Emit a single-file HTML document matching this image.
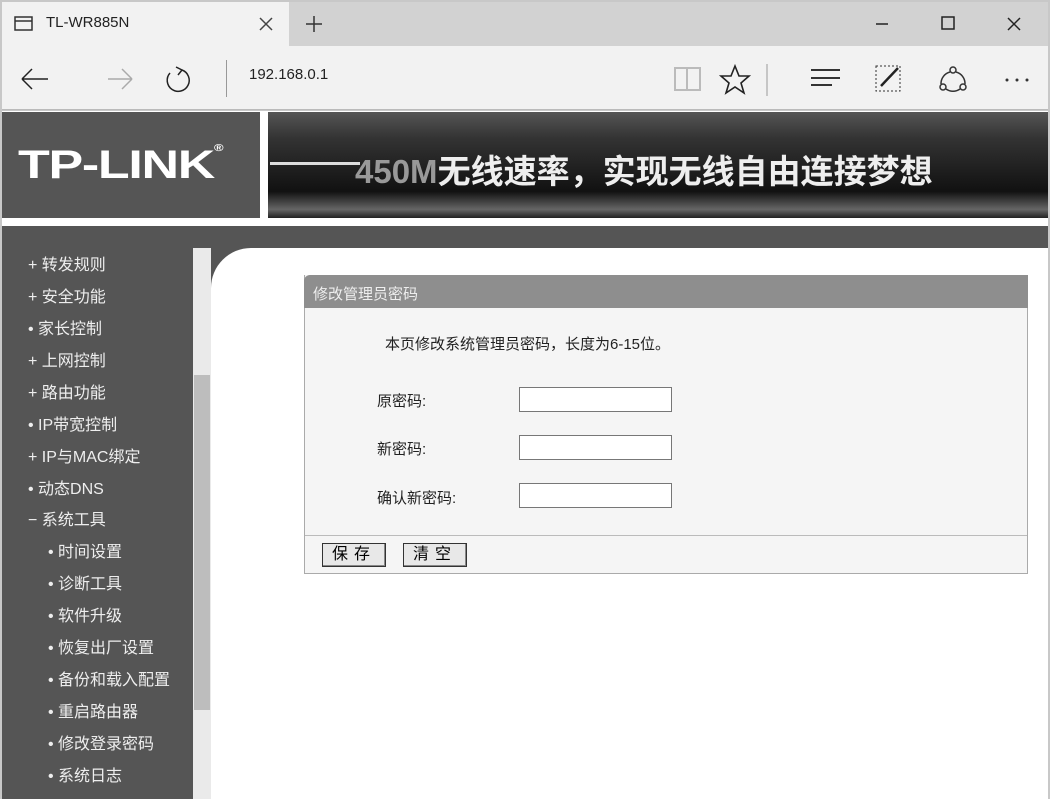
<!DOCTYPE html>
<html><head><meta charset="utf-8"><style>
*{margin:0;padding:0;box-sizing:border-box}
body{width:1050px;height:799px;overflow:hidden;background:#c8c8c8;font-family:"Liberation Sans","Noto Sans CJK SC",sans-serif;position:relative}
.a{position:absolute}
.menu div{position:absolute;left:28px;color:#eee;font-size:16px;line-height:20px;white-space:nowrap}
.menu div.s{left:48px}
input{position:absolute;left:519px;width:153px;height:25px;border:1px solid #777;background:#fff}
.lbl{position:absolute;left:377px;font-size:15px;color:#222}
.btn{position:absolute;top:543px;height:24px;border:1px solid #333;background:#e8e8e8;font-size:16px;line-height:22px;text-align:center;letter-spacing:6px;box-shadow:inset -1px -1px 0 #888}
</style></head><body>
<div class="a" style="left:2px;top:2px;width:1046px;height:44px;background:#d2d2d2"></div>
<div class="a" style="left:2px;top:2px;width:287px;height:44px;background:#f2f2f2"></div>
<svg class="a" style="left:14px;top:16px" width="20" height="16"><rect x="1" y="1" width="17" height="13" fill="none" stroke="#333" stroke-width="1.5"/><line x1="1" y1="5" x2="18" y2="5" stroke="#333" stroke-width="1.5"/></svg>
<div class="a" style="left:46px;top:14px;font-size:15px;color:#222">TL-WR885N</div>
<svg class="a" style="left:258px;top:16px" width="16" height="16"><path d="M2 2L14 14M14 2L2 14" stroke="#444" stroke-width="1.5"/></svg>
<svg class="a" style="left:304px;top:14px" width="20" height="20"><path d="M10 2V18M2 10H18" stroke="#333" stroke-width="1.5"/></svg>
<svg class="a" style="left:870px;top:14px" width="160" height="20"><path d="M6 10H18" stroke="#222" stroke-width="1.5"/><rect x="72" y="3" width="12" height="12" fill="none" stroke="#222" stroke-width="1.5"/><path d="M138 4L150 16M150 4L138 16" stroke="#222" stroke-width="1.5"/></svg>
<div class="a" style="left:2px;top:46px;width:1046px;height:64px;background:#f2f2f2;border-bottom:1px solid #bbb"></div>
<svg class="a" style="left:18px;top:64px" width="180" height="30"><path d="M4 15H30M4 15L14 5M4 15L14 25" stroke="#222" stroke-width="1.5" fill="none"/><path d="M90 15H114M114 15L104 5M114 15L104 25" stroke="#aaa" stroke-width="1.5" fill="none"/><path d="M164 6A11 11 0 1 1 152 9" stroke="#222" stroke-width="1.5" fill="none"/><path d="M158 3L164 6L160 11" stroke="#222" stroke-width="1.5" fill="none"/></svg>
<div class="a" style="left:226px;top:60px;width:1px;height:37px;background:#999"></div>
<div class="a" style="left:249px;top:66px;font-size:15px;color:#222">192.168.0.1</div>
<svg class="a" style="left:670px;top:60px;width:370px;height:40px" viewBox="0 0 370 40"><path d="M5 8H17V30H5ZM17 8H30V30H17Z" fill="none" stroke="#bbb" stroke-width="2"/><path d="M65 6L69 16L79 16L71 23L74 33L65 27L56 33L59 23L51 16L61 16Z" fill="none" stroke="#222" stroke-width="1.6"/><line x1="97" y1="4" x2="97" y2="36" stroke="#999"/><path d="M141 10H170M141 18H170M141 25H162" stroke="#333" stroke-width="2"/><rect x="206" y="6" width="24" height="25" fill="none" stroke="#333" stroke-dasharray="2 2"/><path d="M211 26L228 8" stroke="#222" stroke-width="2.5"/><circle cx="283" cy="10" r="3" fill="none" stroke="#333" stroke-width="1.5"/><circle cx="273" cy="27" r="3" fill="none" stroke="#333" stroke-width="1.5"/><circle cx="293" cy="27" r="3" fill="none" stroke="#333" stroke-width="1.5"/><path d="M280 12A12 12 0 0 0 271 24M286 12A12 12 0 0 1 295 24M276 29A12 12 0 0 0 290 29" fill="none" stroke="#333" stroke-width="1.5"/><circle cx="337" cy="20" r="1.5" fill="#333"/><circle cx="347" cy="20" r="1.5" fill="#333"/><circle cx="357" cy="20" r="1.5" fill="#333"/></svg>
<div class="a" style="left:2px;top:111px;width:1046px;height:688px;background:#fff"></div>
<div class="a" style="left:2px;top:112px;width:258px;height:106px;background:#555"></div>
<div class="a" style="left:18px;top:143px;font-size:40px;font-weight:bold;color:#fff;letter-spacing:-1px;transform:scaleX(1.3);transform-origin:left;white-space:nowrap">TP-LINK<span style="font-size:10px;vertical-align:top">®</span></div>
<div class="a" style="left:268px;top:112px;width:780px;height:106px;background:linear-gradient(180deg,#555 0%,#333 25%,#222 50%,#111 75%,#666 92%,#222 100%)"></div>
<div class="a" style="left:270px;top:162px;width:90px;height:3px;background:#ddd"></div>
<div class="a" style="left:355px;top:145px;font-size:33px;font-weight:bold;color:#eee;white-space:nowrap"><span style="color:#999">450M</span>无线速率，实现无线自由连接梦想</div>
<div class="a" style="left:2px;top:226px;width:1046px;height:22px;background:#555"></div>
<div class="a" style="left:2px;top:248px;width:191px;height:551px;background:#555"></div>
<div class="a" style="left:193px;top:248px;width:18px;height:551px;background:#eaeaea"></div>
<div class="a" style="left:194px;top:375px;width:16px;height:335px;background:#bdbdbd"></div>
<div class="a" style="left:211px;top:248px;width:40px;height:40px;background:#555"></div>
<div class="a" style="left:211px;top:248px;width:80px;height:80px;background:#fff;border-top-left-radius:40px"></div>
<div class="menu">
<div style="top:256px">+ 转发规则</div><div style="top:288px">+ 安全功能</div><div style="top:320px">• 家长控制</div><div style="top:352px">+ 上网控制</div><div style="top:384px">+ 路由功能</div><div style="top:416px">• IP带宽控制</div><div style="top:448px">+ IP与MAC绑定</div><div style="top:480px">• 动态DNS</div><div style="top:511px">− 系统工具</div>
<div class="s" style="top:543px">• 时间设置</div><div class="s" style="top:575px">• 诊断工具</div><div class="s" style="top:607px">• 软件升级</div><div class="s" style="top:639px">• 恢复出厂设置</div><div class="s" style="top:671px">• 备份和载入配置</div><div class="s" style="top:703px">• 重启路由器</div><div class="s" style="top:735px">• 修改登录密码</div><div class="s" style="top:767px">• 系统日志</div>
</div>
<div class="a" style="left:304px;top:275px;width:724px;height:299px;background:#f5f5f5;border:1px solid #aaa;border-top:none"></div>
<div class="a" style="left:304px;top:275px;width:724px;height:33px;background:#8e8e8e;border-top-left-radius:6px"></div>
<div class="a" style="left:313px;top:283px;font-size:15px;color:#eee">修改管理员密码</div>
<div class="a" style="left:385px;top:333px;font-size:15px;color:#222">本页修改系统管理员密码，长度为6-15位。</div>
<div class="lbl" style="top:390px">原密码:</div><input style="top:387px">
<div class="lbl" style="top:438px">新密码:</div><input style="top:435px">
<div class="lbl" style="top:487px">确认新密码:</div><input style="top:483px">
<div class="a" style="left:305px;top:535px;width:722px;height:1px;background:#bbb"></div>
<div class="btn" style="left:322px;width:64px">保存</div>
<div class="btn" style="left:403px;width:64px">清空</div>
</body></html>
